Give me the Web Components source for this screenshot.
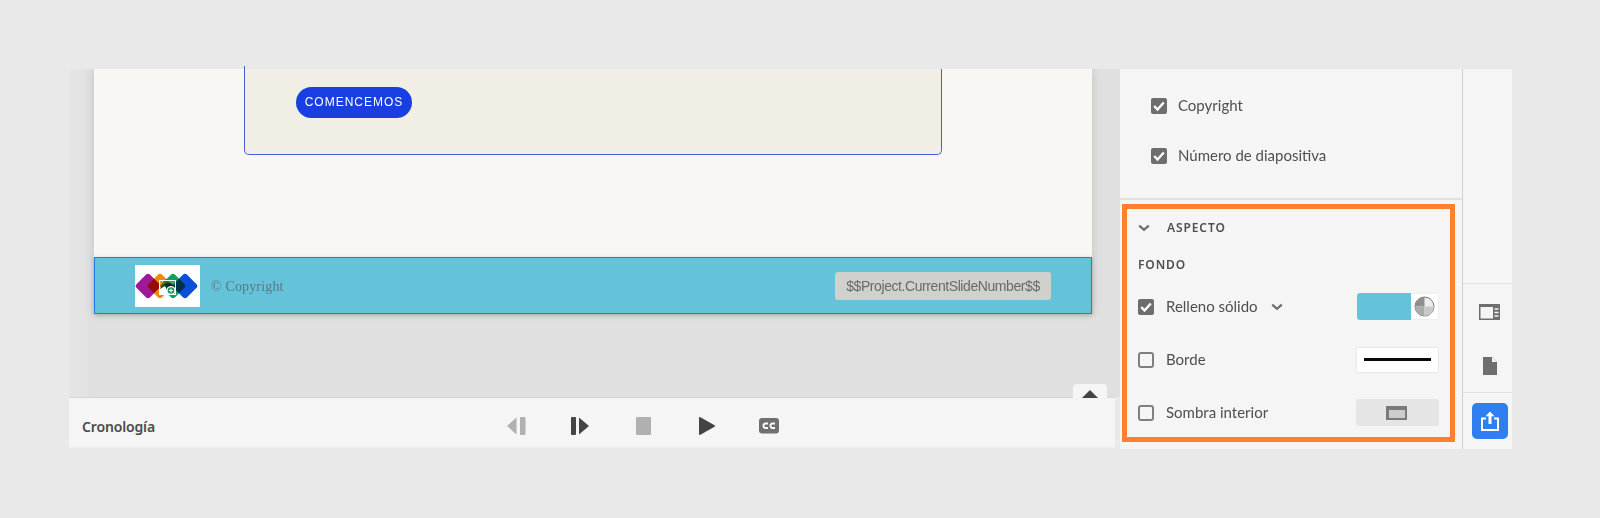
<!doctype html>
<html lang="es">
<head>
<meta charset="utf-8">
<title>Aspecto</title>
<style>
  html,body{margin:0;height:100%;background:#e9e9e9;overflow:hidden}
  body{padding:69px 0 0 69px;box-sizing:border-box;font-family:"Noto Sans",sans-serif}
</style>
</head>
<body>
<app-shell>
  <slide-canvas slot="canvas"></slide-canvas>
  <timeline-bar slot="timeline">Cronología</timeline-bar>
  <props-panel slot="panel"></props-panel>
  <side-rail slot="rail"></side-rail>
</app-shell>
<script>
function el(name, css, html){
  customElements.define(name, class extends HTMLElement{
    constructor(){super();const r=this.attachShadow({mode:'open'});r.innerHTML='<style>'+css+'</style>'+(typeof html==='function'?html(this):html);}
  });
}
const CHECK='<svg viewBox="0 0 16 16" width="16" height="16"><rect width="16" height="16" rx="2" fill="#6e6e6e"/><path d="M3.2 8l3.300 3.500 6.300-7" fill="none" stroke="#fff" stroke-width="2.400"/></svg>';
const UNCHECK='<svg viewBox="0 0 16 16" width="16" height="16"><rect x="1" y="1" width="14" height="14" rx="2" fill="#f5f5f5" stroke="#808080" stroke-width="2"/></svg>';
const CHEV='<svg viewBox="0 0 12 8" width="12" height="8"><path d="M1.2 1.6L6 5.8l4.800-4.200" fill="none" stroke="#6e6e6e" stroke-width="2.300"/></svg>';

el('app-shell',`
  :host{display:flex;width:1443px;height:380px}
  .left{width:1051px;display:flex;flex-direction:column;flex:none}
  ::slotted([slot=canvas]){flex:1;min-height:0}
`,`<div class="left"><slot name="canvas"></slot><slot name="timeline"></slot></div><slot name="panel"></slot><slot name="rail"></slot>`);

el('slide-logo',`
  :host{display:block;width:65px;height:42px;background:#fff;flex:none}
  svg{display:block}
  rect.m{mix-blend-mode:multiply}
`,`<svg width="65" height="42" viewBox="0 0 65 42">
  <rect class="m" x="3.500" y="11.500" width="19" height="19" rx="3" transform="rotate(45 13 21)" fill="#a0189a"/>
  <rect class="m" x="15.500" y="11.500" width="19" height="19" rx="3" transform="rotate(45 25 21)" fill="#ea8a10"/>
  <rect class="m" x="28.500" y="11.500" width="19" height="19" rx="3" transform="rotate(45 38 21)" fill="#12a05a"/>
  <rect class="m" x="40.500" y="11.500" width="19" height="19" rx="3" transform="rotate(45 50 21)" fill="#0a4fd8"/>
  <rect x="24.500" y="15.500" width="16" height="14" fill="#fff" fill-opacity=".12" stroke="#fff" stroke-width="1"/>
  <path d="M25 24l5-5 2-1 3 0 5 3v3z" fill="#06301f"/>
  <path d="M25 29v-5l5-3 4 8z" fill="#fff"/>
  <circle cx="36" cy="25.500" r="4.500" fill="#fff"/><circle cx="36" cy="25.500" r="3.300" fill="#129a5a"/>
  <path d="M36 23.500v4M34 25.500h4" stroke="#fff" stroke-width="1"/>
</svg>`);

el('slide-canvas',`
  :host{display:flex;position:relative;background:#e0e0e0}
  .clip{flex:1;display:flex;padding:0 27px 83px 25px;overflow:hidden;box-sizing:border-box;background:linear-gradient(90deg,#e6e6e6,#e0e0e0 24px)}
  .slide{width:998px;background:#f8f7f3;display:flex;flex-direction:column;justify-content:flex-end;box-shadow:0 0 9px rgba(0,0,0,.14)}
  .card{flex:none;margin:0 0 102px 150px;width:698px;box-sizing:border-box;height:120px;background:#f1eee6;border:1px solid #4460d8;border-top:0;border-radius:0 0 5px 5px;padding:0 0 0 51px;display:flex;flex-direction:column;justify-content:flex-end}
  .btn{width:116px;height:31px;margin-bottom:36px;border-radius:16px;background:#173fe2;color:#fff;font:12px/31px "Liberation Sans",sans-serif;letter-spacing:1px;text-align:center}
  .band{flex:none;height:57px;box-sizing:border-box;background:#64c3d9;border:1px solid #1e7de8;display:flex;align-items:center;padding:0 40px;box-shadow:0 1px 4px rgba(0,0,0,.2)}
  .copy{margin-left:11px;font:14px "Liberation Serif",serif;color:#5b7885;flex:1;padding-top:2px;letter-spacing:.15px}
  .pill{width:216px;height:28px;background:#d0d0cc;border-radius:3px;font:14px/28px "Liberation Sans",sans-serif;color:#6a6a6a;text-align:center;letter-spacing:-.42px}
  .tick{position:absolute;left:175px;top:-3px;width:1px;height:3px;background:#4460d8}
`,`<div class="clip"><div class="slide">
  <div class="card"><div class="btn">COMENCEMOS</div></div>
  <div class="band"><slide-logo></slide-logo><div class="copy">© Copyright</div><div class="pill">$$Project.CurrentSlideNumber$$</div></div>
</div></div><div class="tick"></div>`);

el('timeline-bar',`
  :host{display:block;height:52px;flex:none;box-sizing:border-box;background:#e9e9e9}
  .bar{height:49px;width:1046px;box-sizing:border-box;border-top:1px solid #d5d5d5;background:#f5f5f5;display:flex;align-items:center;padding:8px 0 0 13px;position:relative}
  .line{height:2px;width:1046px;background:#f1f1f1}
  .title{font:600 14px "Noto Sans",sans-serif;color:#4b4b4b;width:425px;flex:none;letter-spacing:-.15px}
  .ctrl{display:flex;align-items:center}
  svg{display:block;flex:none}
  .tab{position:absolute;left:1004px;top:-14px;width:34px;height:14px;background:#f5f5f5;border-radius:4px 4px 0 0}
  .tab::after{content:"";position:absolute;left:9px;top:6px;border:8px solid transparent;border-top:0;border-bottom:8px solid #444}
`,`<div class="bar"><div class="title"><slot></slot></div>
  <div class="ctrl">
    <svg width="19" height="18" viewBox="0 0 19 18" style="margin-right:45px"><path d="M0 9L9.500 .5v17z" fill="#b0b0b0"/><rect x="13" y="0" width="5.500" height="18" rx="1" fill="#b0b0b0"/></svg>
    <svg width="18" height="18" viewBox="0 0 18 18" style="margin-right:47px"><rect width="5" height="18" rx="1" fill="#444"/><path d="M8 .5L18 9 8 17.500z" fill="#444"/></svg>
    <svg width="15" height="18" viewBox="0 0 15 18" style="margin-right:48px"><rect width="15" height="18" rx="1" fill="#b0b0b0"/></svg>
    <svg width="16" height="18" viewBox="0 0 16 18" style="margin-right:44px"><path d="M1 0l14.500 8.200a1 1 0 010 1.600L1 18a1 1 0 01-1-1V1a1 1 0 011-1z" fill="#444"/></svg>
    <svg width="20" height="16" viewBox="0 0 20 16"><rect width="20" height="15.500" rx="3" fill="#707070"/><path d="M9 5.500H6.500a2 2 0 00-2 2.200 2 2 0 002 2.300H9M16 5.500h-2.500a2 2 0 00-2 2.200 2 2 0 002 2.300H16" fill="none" stroke="#fff" stroke-width="1.900"/></svg>
  </div>
  <div class="tab"></div>
</div><div class="line"></div>`);

el('check-row',`
  :host{display:flex;align-items:center;font:15px Lato,sans-serif;color:#4f4f4f}
  .t{margin:-2px 0 0 var(--gap,11px)}
  svg{display:block;flex:none}
`,h=>`${h.hasAttribute('checked')?CHECK:UNCHECK}<span class="t"><slot></slot></span>`);

el('fill-swatch',`
  :host{display:flex;width:82px;height:27px;border-radius:3px;overflow:hidden;background:#fff}
  .c{width:54px;background:#64c3d9}
  .p{flex:1;display:flex;align-items:center;justify-content:center;border:1px solid #eee;border-left:0}
`,`<div class="c"></div><div class="p"><svg width="21" height="21" viewBox="0 0 21 21"><circle cx="10.500" cy="10.500" r="9.500" fill="#ececec" stroke="#777"/><path d="M10.500 10.500V1a9.500 9.500 0 00-9.500 9.500z" fill="#8f8f8f"/><path d="M10.500 10.500H1a9.500 9.500 0 009.500 9.500z" fill="#ababab"/><path d="M10.500 10.500V20a9.500 9.500 0 009.500-9.500z" fill="#c8c8c8"/></svg></div>`);

el('stroke-swatch',`
  :host{display:flex;align-items:center;justify-content:center;width:83px;height:26px;box-sizing:border-box;background:#fff;border:1px solid #e9e9e9;border-radius:2px}
  i{display:block;width:67px;height:3px;background:#0a0a0a}
`,`<i></i>`);

el('shadow-swatch',`
  :host{display:flex;align-items:center;justify-content:center;width:83px;height:27px;box-sizing:border-box;padding-right:2px;background:#e5e5e5;border-radius:3px}
  svg{display:block}
`,`<svg width="21" height="14" viewBox="0 0 21 14"><rect width="21" height="14" fill="#7a7a7a"/><rect x="3" y="4" width="16" height="8" fill="#cdcdcd"/></svg>`);

el('props-panel',`
  :host{display:flex;flex-direction:column;width:343px;height:380px;flex:none;box-sizing:border-box;background:#f5f5f5;border-right:1px solid #d0d0d0}
  .top{height:131px;flex:none;box-sizing:border-box;border-bottom:2px solid #e1e1e1;padding:29px 0 0 31px;display:flex;flex-direction:column;gap:34px}
  .top check-row{height:16px;--gap:11px}
  .box{margin:4px 7px 0 2px;height:238px;flex:none;box-sizing:border-box;border:5px solid #ff8130;padding:0 11px;display:flex;flex-direction:column}
  .hd{display:flex;align-items:center;height:29px;margin-top:4px;font:600 12px "Noto Sans",sans-serif;letter-spacing:.9px;color:#4f4f4f}
  .hd svg{margin-right:17px}
  .sub{font:600 12px "Noto Sans",sans-serif;letter-spacing:.9px;color:#4f4f4f;margin-top:15px;height:16px;line-height:16px;margin-bottom:20px}
  .row{display:flex;align-items:center;justify-content:space-between;height:27px}
  .row+.row{margin-top:26px}
  .l{display:flex;align-items:center}
  .l svg{margin-left:13px;display:block}
  check-row{--gap:12px}
`,`<div class="top">
   <check-row checked>Copyright</check-row>
   <check-row checked>Número de diapositiva</check-row>
 </div>
 <div class="box">
   <div class="hd">${CHEV}<span>ASPECTO</span></div>
   <div class="sub">FONDO</div>
   <div class="row"><div class="l"><check-row checked>Relleno sólido</check-row>${CHEV}</div><fill-swatch></fill-swatch></div>
   <div class="row"><check-row>Borde</check-row><stroke-swatch></stroke-swatch></div>
   <div class="row"><check-row>Sombra interior</check-row><shadow-swatch></shadow-swatch></div>
 </div>`);

el('side-rail',`
  :host{display:flex;flex-direction:column;width:49px;height:380px;flex:none;background:#f5f5f5}
  .a{height:215px;box-sizing:border-box;border-bottom:1px solid #e1e1e1;flex:none}
  .b{height:109px;box-sizing:border-box;border-bottom:1px solid #e1e1e1;flex:none;display:flex;flex-direction:column;align-items:center;padding:20px 0 0 4px;gap:37px}
  svg{display:block}
  .c{flex:1;padding:10px 0 0 9px}
  .up{width:36px;height:36px;border-radius:5px;background:#2f7ff0;display:flex;align-items:center;justify-content:center}
`,`<div class="a"></div>
 <div class="b">
  <svg width="21" height="16" viewBox="0 0 21 16"><rect width="21" height="16" fill="#6e6e6e"/><rect x="1.500" y="3" width="12.500" height="11.500" fill="#f5f5f5"/><path d="M15.500 5h4M15.500 8.500h4M15.500 12h4" stroke="#f5f5f5" stroke-width="1.300"/></svg>
  <svg width="14" height="18" viewBox="0 0 14 18"><path d="M0 0h9l5 5v13H0z" fill="#6e6e6e"/><path d="M9 0v5h5" fill="#f5f5f5"/></svg>
 </div>
 <div class="c"><div class="up"><svg width="18" height="20" viewBox="0 0 18 20"><path d="M9 .5L4.500 5.200H7.500V13h3V5.200h3z" fill="#fff"/><path d="M5 7.500H1V19h16V7.500h-4" fill="none" stroke="#fff" stroke-width="2"/></svg></div></div>`);
</script>
</body>
</html>
